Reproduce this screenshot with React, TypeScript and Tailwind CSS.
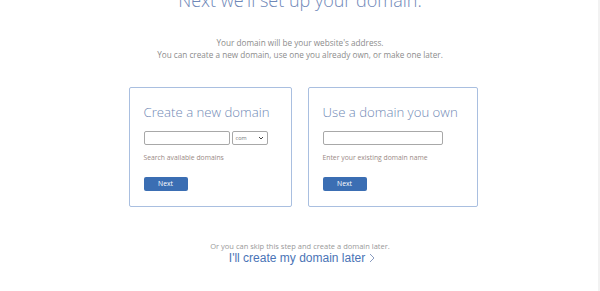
export default function App() {
  return (
    <div className="relative w-[600px] h-[291px] overflow-hidden bg-white font-['Open_Sans',sans-serif]">
      <div className="flex flex-col items-center">
        <h1 className="-mt-[12px] text-[18px] leading-[24px] font-light text-[#6f88b8]">
          Next we'll set up your domain.
        </h1>
        <div className="mt-[25px] text-center text-[8.2px] leading-[12px] text-[#8c8c8c]">
          <p>Your domain will be your website's address.</p>
          <p>You can create a new domain, use one you already own, or make one later.</p>
        </div>
        <div className="mt-[26px] ml-[6px] flex gap-[16px]">
          <div className="w-[163px] h-[120px] rounded-[2px] border border-[#a9bfe0] px-[14px] pt-[15px]">
            <h2 className="text-[13.2px] leading-[18px] font-light text-[#7089b5]">Create a new domain</h2>
            <div className="mt-[10px] flex gap-[2px]">
              <div className="w-[86px] h-[14px] rounded-[2px] border border-[#a8a8a8]" />
              <div className="w-[36px] h-[14px] rounded-[2px] border border-[#a8a8a8] flex items-center justify-between px-[3px]">
                <span className="text-[5.5px] text-[#777]">com</span>
                <svg width="6" height="4" viewBox="0 0 6 4">
                  <path d="M1 1 L3 3 L5 1" stroke="#444" strokeWidth="1" fill="none" />
                </svg>
              </div>
            </div>
            <p className="mt-[8px] text-[6.8px] leading-[10px] text-[#9a8a85]">Search available domains</p>
            <button className="mt-[14px] w-[44px] h-[14px] rounded-[2px] bg-[#3b6eb3] text-[6.8px] text-white">
              Next
            </button>
          </div>
          <div className="w-[170px] h-[120px] rounded-[2px] border border-[#a9bfe0] px-[14px] pt-[15px]">
            <h2 className="text-[13.2px] leading-[18px] font-light text-[#7089b5]">Use a domain you own</h2>
            <div className="mt-[10px] flex">
              <div className="w-[120px] h-[14px] rounded-[2px] border border-[#a8a8a8]" />
            </div>
            <p className="mt-[8px] text-[6.8px] leading-[10px] text-[#9a8a85]">Enter your existing domain name</p>
            <button className="mt-[14px] w-[44px] h-[14px] rounded-[2px] bg-[#3b6eb3] text-[6.8px] text-white">
              Next
            </button>
          </div>
        </div>
        <p className="mt-[34px] text-[7.5px] leading-[10px] text-[#999]">
          Or you can skip this step and create a domain later.
        </p>
        <p className="ml-[4px] flex items-center gap-[4px] font-['Liberation_Sans',sans-serif] text-[12px] leading-[14px] text-[#4a74b6]">
          I'll create my domain later
          <svg width="6" height="10" viewBox="0 0 6 10">
            <path d="M1 1 L5 5 L1 9" stroke="#8a9cc0" strokeWidth="1" fill="none" />
          </svg>
        </p>
      </div>
      <div className="absolute right-0 top-0 h-full w-[2px] bg-[#f2f2f2]" />
    </div>
  );
}
